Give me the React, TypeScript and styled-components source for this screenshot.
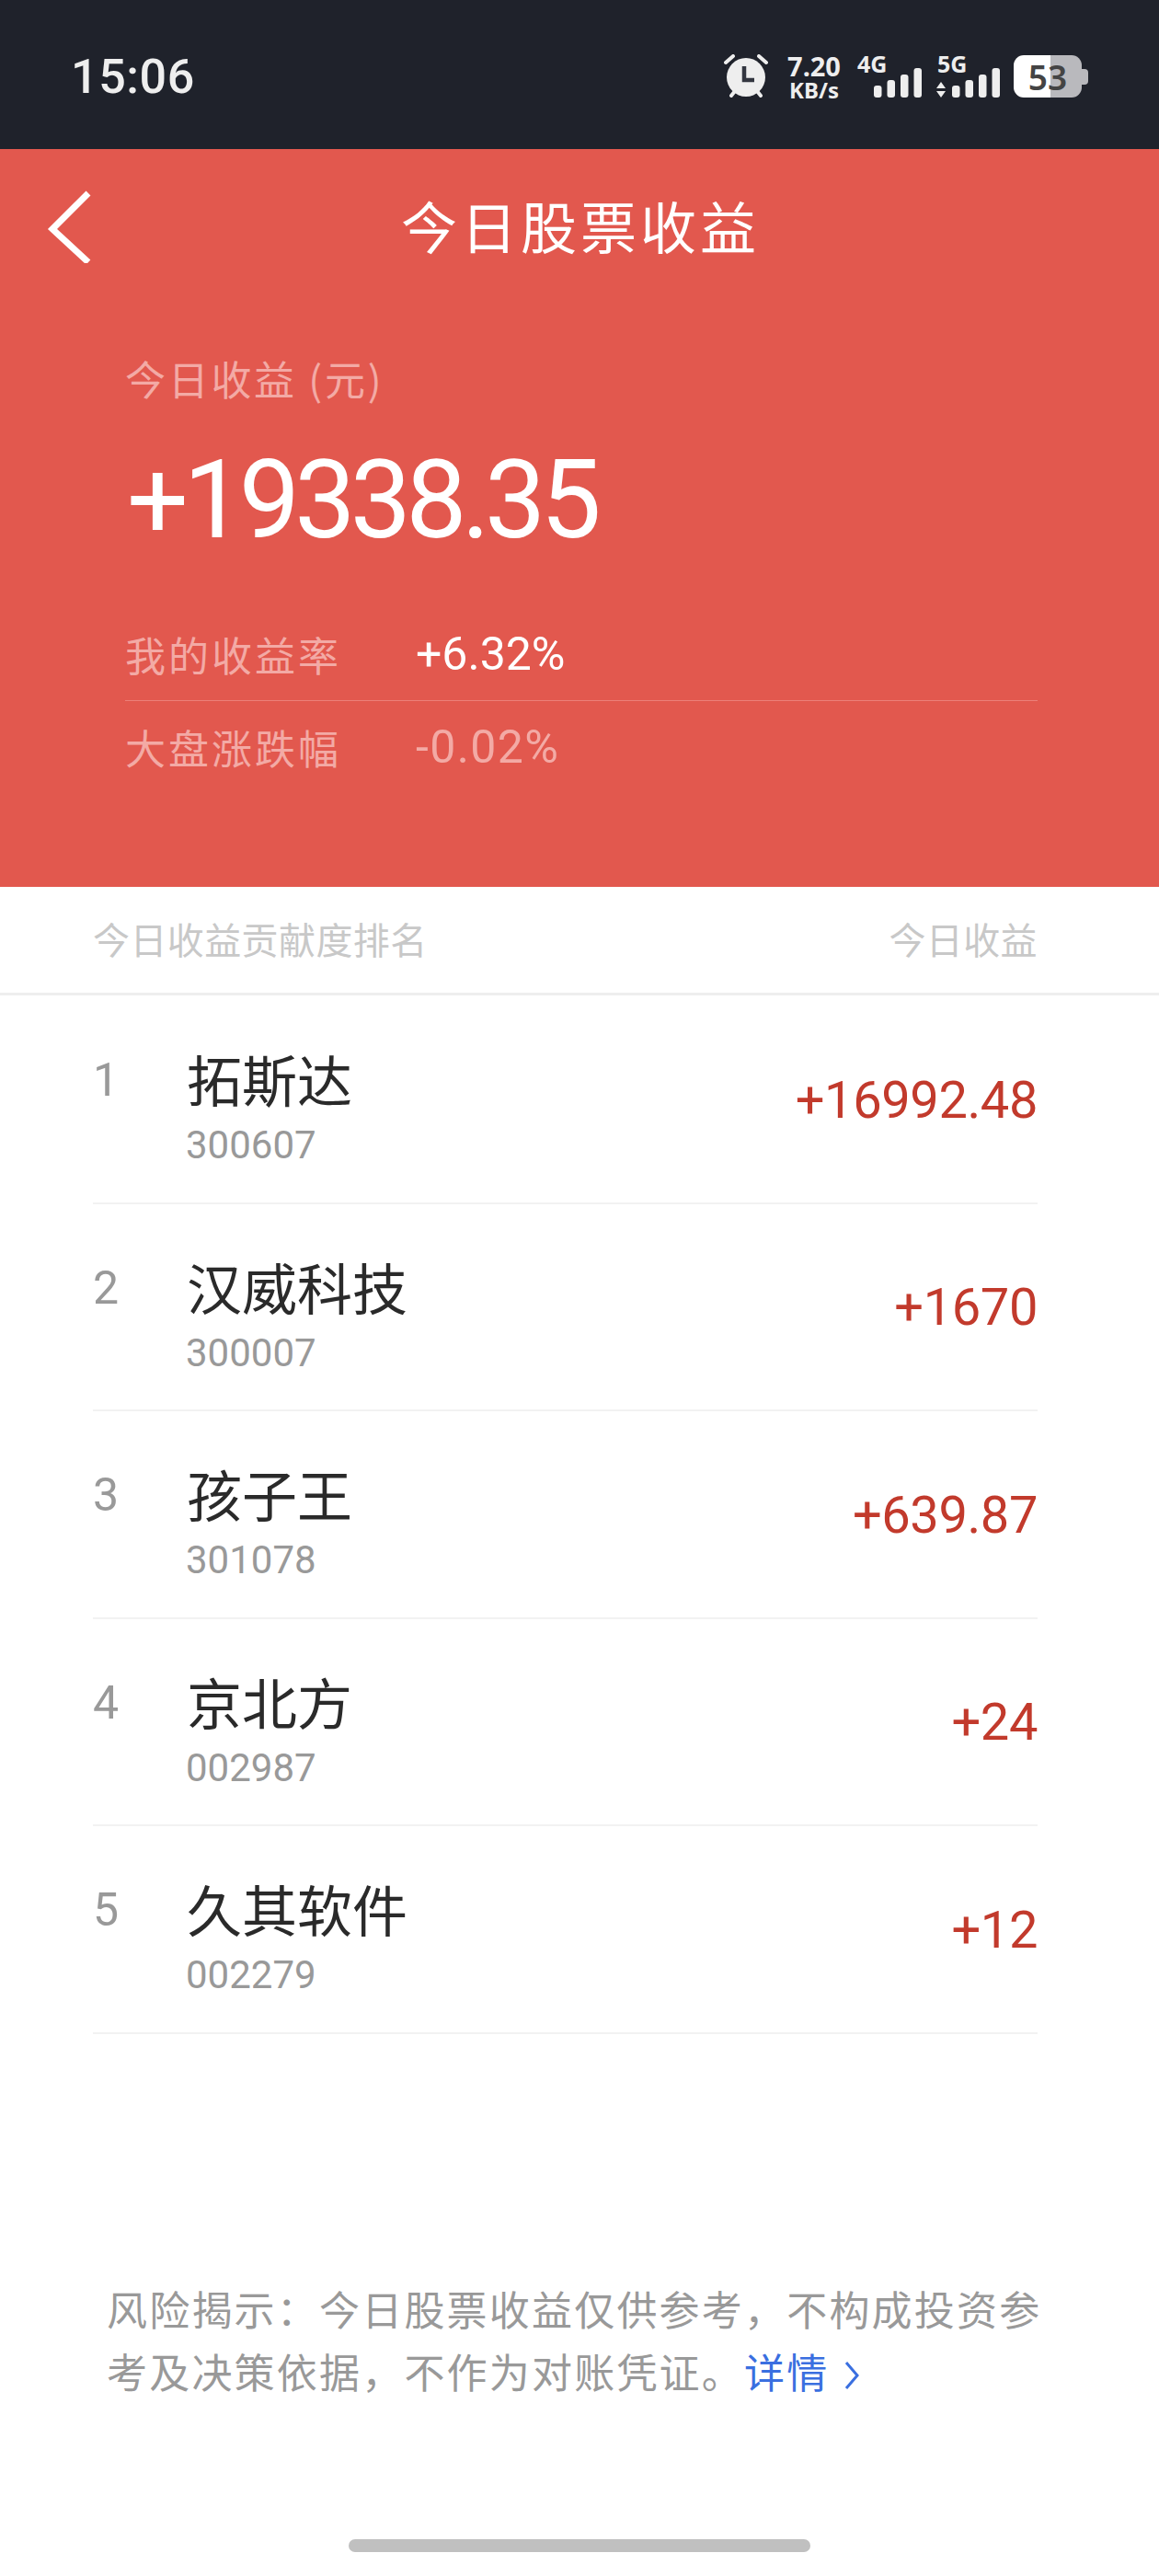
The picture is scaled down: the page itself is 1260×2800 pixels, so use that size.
import React from 'react'
import styled, { createGlobalStyle } from 'styled-components'

const CJK = `"Noto Sans CJK SC", "Noto Sans", sans-serif`
const NUM = `Roboto, "Noto Sans CJK SC", sans-serif`

const GlobalStyle = createGlobalStyle`
  html, body {
    margin: 0;
    padding: 0;
    background: #fff;
  }
  * {
    box-sizing: border-box;
  }
`

const Page = styled.div`
  width: 1260px;
  height: 2800px;
  display: flex;
  flex-direction: column;
  background: #fff;
  overflow: hidden;
  font-family: ${CJK};
`

const StatusBar = styled.div`
  height: 162px;
  flex: none;
  background: #1f222b;
  color: #eeeeee;
  display: flex;
  align-items: flex-start;
  justify-content: space-between;
  padding: 59px 77px 0 77px;
`

const Clock = styled.div`
  font-family: ${NUM};
  font-size: 52px;
  line-height: 50px;
  letter-spacing: 0.6px;
  font-weight: 500;
`

const StatusIcons = styled.div`
  display: flex;
  align-items: flex-start;
`

const NetSpeed = styled.div`
  display: flex;
  flex-direction: column;
  align-items: center;
  width: 56px;
  margin: -2px 19px 0 22px;
  font-family: "Noto Sans", sans-serif;
  font-weight: 700;
  color: #eeeeee;
`

const SpeedValue = styled.span`
  font-size: 29px;
  line-height: 29px;
`

const SpeedUnit = styled.span`
  font-size: 24px;
  line-height: 24px;
`

const Signal = styled.div`
  position: relative;
  width: 70px;
  height: 48px;
  margin-right: 15px;
`

const SignalLabel = styled.span<{ $left: number }>`
  position: absolute;
  left: ${(p) => p.$left}px;
  top: -3px;
  font-family: "Noto Sans", sans-serif;
  font-weight: 700;
  font-size: 25px;
  line-height: 26px;
`

const SignalBars = styled.svg`
  display: block;
`

const Battery = styled.div`
  position: relative;
  width: 74px;
  height: 46px;
  margin: 1px 7px 0 0;
  border-radius: 11px;
  background: linear-gradient(90deg, #ffffff 0, #ffffff 40px, #b9b9bd 40px, #b9b9bd 100%);
  display: flex;
  align-items: center;
  justify-content: center;
  font-family: "Noto Sans", sans-serif;
  font-weight: 600;
  font-size: 37px;
  color: #444444;

  &::after {
    content: '';
    position: absolute;
    right: -7px;
    top: 15px;
    width: 7px;
    height: 17px;
    border-radius: 0 4px 4px 0;
    background: #b9b9bd;
  }
`

const Hero = styled.section`
  height: 802px;
  flex: none;
  background: #e2584e;
  color: #fff;
`

const NavBar = styled.div`
  position: relative;
  height: 166px;
  display: flex;
  align-items: center;
  justify-content: center;
`

const BackIcon = styled.svg`
  position: absolute;
  left: 48px;
  top: 40px;
`

const Title = styled.h1`
  margin: 0;
  font-size: 61px;
  font-weight: 400;
  line-height: 80px;
  letter-spacing: 4px;
  margin-left: 2px;
`

const Summary = styled.div`
  padding: 0 132px 0 136px;
`

const SummaryLabel = styled.div`
  font-size: 44px;
  line-height: 60px;
  letter-spacing: 2.7px;
  font-weight: 400;
  color: #f3aaa5;
  margin-top: 53px;
`

const Total = styled.div`
  font-family: ${NUM};
  font-size: 118px;
  line-height: 130px;
  font-weight: 400;
  letter-spacing: -5.8px;
  margin-top: 38px;
  margin-left: 2px;
`

const Stats = styled.div`
  margin-top: 52px;
`

const StatRow = styled.div<{ $divided?: boolean }>`
  display: flex;
  align-items: center;
  height: ${(p) => (p.$divided ? 101 : 100)}px;
  border-bottom: ${(p) => (p.$divided ? '1px solid #ec8079' : 'none')};
`

const StatLabel = styled.span`
  width: 316px;
  font-size: 44px;
  letter-spacing: 3px;
  font-weight: 400;
  color: #f3aaa5;
`

const StatValue = styled.span<{ $muted?: boolean }>`
  font-family: ${NUM};
  font-size: 50px;
  letter-spacing: ${(p) => (p.$muted ? '1.4px' : '0')};
  color: ${(p) => (p.$muted ? '#f3aaa5' : '#ffffff')};
`

const ListHeader = styled.div`
  height: 118px;
  flex: none;
  display: flex;
  align-items: center;
  justify-content: space-between;
  padding: 0 132px 4px 101px;
  border-bottom: 3px solid #eeeeee;
  font-size: 40px;
  letter-spacing: 0.4px;
  font-weight: 400;
  color: #c8c8c8;
`

const List = styled.div`
  margin: 1px 132px 0 101px;
`

const Row = styled.div`
  height: 225.5px;
  display: grid;
  grid-template-columns: 102px 1fr auto;
  align-items: center;
  border-bottom: 2px solid #f2f2f2;
`

const Rank = styled.span`
  align-self: start;
  padding-top: 55px;
  font-family: ${NUM};
  font-size: 50px;
  line-height: 72px;
  color: #999999;
`

const Stock = styled.div`
  align-self: start;
  padding-top: 53px;
`

const StockName = styled.div`
  font-size: 60px;
  line-height: 72px;
  color: #2a2a2a;
`

const StockCode = styled.div`
  font-family: ${NUM};
  font-size: 42px;
  line-height: 48px;
  margin-top: 13px;
  margin-left: -1px;
  color: #999999;
`

const Gain = styled.span`
  font-family: ${NUM};
  font-size: 56px;
  letter-spacing: -0.4px;
  padding-top: 2px;
  color: #c23a2c;
`

const Notice = styled.div`
  margin: 264px 0 0 116px;
  font-size: 44px;
  line-height: 68px;
  letter-spacing: 2.2px;
  font-weight: 400;
  color: #999999;
`

const NoticeLine = styled.div`
  white-space: nowrap;
`

const DetailLink = styled.a`
  color: #3a6fe0;
  font-weight: 400;
`

const DetailArrow = styled.svg`
  margin-left: 16px;
  vertical-align: -3px;
`

const HomeBar = styled.div`
  width: 502px;
  height: 14px;
  flex: none;
  margin: auto auto 26px;
  border-radius: 7px;
  background: #c0c0c0;
`

const stocks = [
  { name: '拓斯达', code: '300607', gain: '+16992.48' },
  { name: '汉威科技', code: '300007', gain: '+1670' },
  { name: '孩子王', code: '301078', gain: '+639.87' },
  { name: '京北方', code: '002987', gain: '+24' },
  { name: '久其软件', code: '002279', gain: '+12' },
]

function AlarmIcon() {
  return (
    <svg width="48" height="48" viewBox="0 0 48 48">
      <circle cx="24" cy="25" r="21" fill="#eeeeee" />
      <path d="M2 9 L10 2 M46 9 L38 2 M8 45 L12 40 M40 45 L36 40" stroke="#eeeeee" strokeWidth="4" strokeLinecap="round" />
      <path d="M22 13 V28 H33" fill="none" stroke="#333640" strokeWidth="4.5" />
    </svg>
  )
}

function Bars({ arrows }: { arrows?: boolean }) {
  const heights = [13, 19, 25, 32]
  return (
    <SignalBars width="70" height="48" viewBox="0 0 70 48">
      {arrows && <path d="M1 37 L6 30 L11 37 Z M1 40 H11 L6 47 Z" fill="#eeeeee" />}
      {heights.map((h, i) => (
        <rect key={i} x={18 + i * 14.5} y={47 - h} width="8.5" height={h} rx="3" fill="#eeeeee" />
      ))}
    </SignalBars>
  )
}

export default function App() {
  return (
    <Page>
      <GlobalStyle />
      <StatusBar>
        <Clock>15:06</Clock>
        <StatusIcons>
          <AlarmIcon />
          <NetSpeed>
            <SpeedValue>7.20</SpeedValue>
            <SpeedUnit>KB/s</SpeedUnit>
          </NetSpeed>
          <Signal>
            <SignalLabel $left={0}>4G</SignalLabel>
            <Bars />
          </Signal>
          <Signal>
            <SignalLabel $left={2}>5G</SignalLabel>
            <Bars arrows />
          </Signal>
          <Battery>53</Battery>
        </StatusIcons>
      </StatusBar>

      <Hero>
        <NavBar>
          <BackIcon width="56" height="84" viewBox="0 0 56 84">
            <path d="M48 8 L9 47 L48 83" fill="none" stroke="#ffffff" strokeWidth="7" />
          </BackIcon>
          <Title>今日股票收益</Title>
        </NavBar>
        <Summary>
          <SummaryLabel>今日收益 (元)</SummaryLabel>
          <Total>+19338.35</Total>
          <Stats>
            <StatRow $divided>
              <StatLabel>我的收益率</StatLabel>
              <StatValue>+6.32%</StatValue>
            </StatRow>
            <StatRow>
              <StatLabel>大盘涨跌幅</StatLabel>
              <StatValue $muted>-0.02%</StatValue>
            </StatRow>
          </Stats>
        </Summary>
      </Hero>

      <ListHeader>
        <span>今日收益贡献度排名</span>
        <span>今日收益</span>
      </ListHeader>
      <List>
        {stocks.map((s, i) => (
          <Row key={s.code}>
            <Rank>{i + 1}</Rank>
            <Stock>
              <StockName>{s.name}</StockName>
              <StockCode>{s.code}</StockCode>
            </Stock>
            <Gain>{s.gain}</Gain>
          </Row>
        ))}
      </List>

      <Notice>
        <NoticeLine>风险揭示：今日股票收益仅供参考，不构成投资参</NoticeLine>
        <NoticeLine>
          考及决策依据，不作为对账凭证。
          <DetailLink>
            详情
            <DetailArrow width="18" height="34" viewBox="0 0 18 34">
              <path d="M3 3 L15 17 L3 31" fill="none" stroke="#3a6fe0" strokeWidth="3" />
            </DetailArrow>
          </DetailLink>
        </NoticeLine>
      </Notice>
      <HomeBar />
    </Page>
  )
}
